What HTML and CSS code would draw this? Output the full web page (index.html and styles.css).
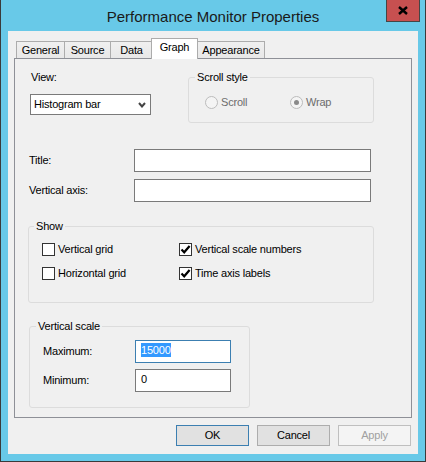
FILE: index.html
```html
<!DOCTYPE html>
<html lang="en">
<head>
<meta charset="utf-8">
<title>Performance Monitor Properties</title>
<link rel="stylesheet" href="styles.css">
</head>
<body>
<div class="window">
  <div class="titlebar">
    <span class="caption">Performance Monitor Properties</span>
    <div class="close-btn">
      <svg width="10" height="9" viewBox="0 0 10 9"><path d="M1 1 L9 8 M9 1 L1 8" stroke="#000" stroke-width="2.4" fill="none"/></svg>
    </div>
  </div>
  <div class="client">
    <div class="tabs">
      <div class="tab t-general">General</div>
      <div class="tab t-source">Source</div>
      <div class="tab t-data">Data</div>
      <div class="tab tab-active t-graph">Graph</div>
      <div class="tab t-appearance">Appearance</div>
    </div>
    <div class="panel">
      <div class="top-row">
        <div class="view-col">
          <div class="lbl view-lbl">View:</div>
          <div class="select">
            <span>Histogram bar</span>
            <svg class="chev" width="8" height="6" viewBox="0 0 8 6"><path d="M1 1 L4 4.5 L7 1" stroke="#444" stroke-width="2" fill="none"/></svg>
          </div>
        </div>
        <fieldset class="group scroll-group">
          <legend>Scroll style</legend>
          <div class="radios">
            <div class="radio-item"><span class="radio"></span><span class="disabled-text">Scroll</span></div>
            <div class="radio-item"><span class="radio radio-on"></span><span class="disabled-text">Wrap</span></div>
          </div>
        </fieldset>
      </div>

      <div class="text-rows">
        <div class="lbl">Title:</div>
        <div class="edit"></div>
        <div class="lbl">Vertical axis:</div>
        <div class="edit"></div>
      </div>

      <fieldset class="group show-group">
        <legend>Show</legend>
        <div class="checks">
          <div class="check-item"><span class="cbox"></span><span>Vertical grid</span></div>
          <div class="check-item"><span class="cbox"><svg width="11" height="11" viewBox="0 0 11 11"><path d="M1.5 5.5 L4.2 8.3 L9.6 2" stroke="#000" stroke-width="2.2" fill="none"/></svg></span><span>Vertical scale numbers</span></div>
          <div class="check-item"><span class="cbox"></span><span>Horizontal grid</span></div>
          <div class="check-item"><span class="cbox"><svg width="11" height="11" viewBox="0 0 11 11"><path d="M1.5 5.5 L4.2 8.3 L9.6 2" stroke="#000" stroke-width="2.2" fill="none"/></svg></span><span>Time axis labels</span></div>
        </div>
      </fieldset>

      <fieldset class="group scale-group">
        <legend>Vertical scale</legend>
        <div class="scale-rows">
          <div class="lbl">Maximum:</div>
          <div class="edit edit-small edit-focus"><span class="sel">15000</span></div>
          <div class="lbl">Minimum:</div>
          <div class="edit edit-small"><span>0</span></div>
        </div>
      </fieldset>
    </div>
    <div class="buttons">
      <div class="btn btn-default">OK</div>
      <div class="btn">Cancel</div>
      <div class="btn btn-disabled">Apply</div>
    </div>
  </div>
</div>
</body>
</html>
```

FILE: styles.css
```css
html, body {
  margin: 0;
  padding: 0;
  background: #ffffff;
}

body {
  font-family: "Liberation Sans", Arial, sans-serif;
  font-size: 11px;
  letter-spacing: -0.2px;
  color: #000;
}

.window {
  width: 426px;
  height: 462px;
  box-sizing: border-box;
  background: #68c9e8;
  border: 1px solid #3a3a3a;
  border-top: 0;
  display: flex;
  flex-direction: column;
  position: relative;
}

.titlebar {
  height: 31px;
  display: flex;
  align-items: center;
  justify-content: center;
  flex: none;
}

.caption {
  font-size: 15px;
  letter-spacing: 0;
  color: #1a1a1a;
  line-height: 17px;
  margin-top: 1px;
}

.close-btn {
  position: absolute;
  top: 0;
  right: 5px;
  width: 34px;
  height: 22px;
  box-sizing: border-box;
  background: #c75050;
  border: 1px solid #454545;
  border-top: 0;
  display: flex;
  align-items: center;
  justify-content: center;
}

.close-btn svg {
  display: block;
  margin-top: 0px;
}

.client {
  margin: 0 7px 7px 7px;
  height: 423px;
  box-sizing: border-box;
  background: #f0f0f0;
  padding: 7px 6px 0 6px;
  display: flex;
  flex-direction: column;
}

/* Tabs */
.tabs {
  height: 20px;
  display: flex;
  align-items: flex-end;
  padding-left: 2px;
  flex: none;
}

.tab {
  height: 17px;
  box-sizing: border-box;
  border: 1px solid #acacac;
  border-bottom: 0;
  background: linear-gradient(#f0f0f0, #e8e8e8);
  line-height: 16px;
  text-align: center;
  margin-left: -1px;
}

.t-general { width: 49px; margin-left: 0; }
.t-source { width: 47px; }
.t-data { width: 43px; }
.t-graph { width: 47px; margin-left: -2px; }
.t-appearance { width: 68px; margin-left: -1px; }

.tab-active {
  height: 21px;
  background: #ffffff;
  margin-bottom: -1px;
  position: relative;
  z-index: 1;
  padding-bottom: 4px;
}

/* Panel */
.panel {
  height: 360px;
  box-sizing: border-box;
  border: 1px solid #8e9097;
  background: #f0f0f0;
  padding-top: 12px;
  flex: none;
}

.lbl {
  line-height: 13px;
}

.top-row {
  display: flex;
  align-items: flex-start;
  margin-left: 15px;
}

.view-col {
  width: 158px;
}

.view-lbl {
  padding-left: 1px;
}

.select {
  margin-top: 10px;
  width: 121px;
  height: 21px;
  box-sizing: border-box;
  border: 1px solid #7a7a7a;
  background: #fff;
  display: flex;
  align-items: center;
  justify-content: space-between;
  padding: 0 3px 0 3px;
  line-height: 13px;
}

.chev {
  display: block;
  margin-right: 1px;
}

fieldset.group {
  margin: 0;
  padding: 0;
  border: 1px solid #dcdcdc;
  border-radius: 3px;
  box-sizing: border-box;
  min-width: 0;
}

fieldset.group legend {
  padding: 0 2px;
  margin-left: 6px;
  line-height: 13px;
}

.scroll-group {
  width: 186px;
  padding-bottom: 13px !important;
}

.radios {
  margin-top: 12px;
  margin-left: 16px;
  display: grid;
  grid-template-columns: 85px auto;
}

.radio-item {
  display: flex;
  align-items: center;
  gap: 3px;
  height: 13px;
  line-height: 13px;
}

.radio {
  width: 13px;
  height: 13px;
  box-sizing: border-box;
  border-radius: 50%;
  border: 1px solid #bcbcbc;
  background: #f4f4f4;
  display: flex;
  align-items: center;
  justify-content: center;
  flex: none;
}

.radio-on::after {
  content: "";
  width: 5px;
  height: 5px;
  border-radius: 50%;
  background: #8a8a8a;
}

.disabled-text {
  color: #6d6d6d;
}

.text-rows {
  margin-top: 26px;
  margin-left: 14px;
  display: grid;
  grid-template-columns: 105px 237px;
  row-gap: 7px;
  align-items: center;
}

.edit {
  height: 23px;
  box-sizing: border-box;
  border: 1px solid #7a7a7a;
  background: #fff;
  padding: 2px 0 0 5px;
  line-height: 14px;
}

.show-group {
  margin-top: 18px !important;
  margin-left: 13px !important;
  width: 346px;
  padding-bottom: 22px !important;
}

.show-group legend {
  margin-left: 5px !important;
}

.checks {
  margin-top: 10px;
  margin-left: 13px;
  display: grid;
  grid-template-columns: 137px auto;
  row-gap: 11px;
}

.check-item {
  display: flex;
  align-items: center;
  gap: 3px;
  height: 13px;
  line-height: 13px;
}

.cbox {
  width: 13px;
  height: 13px;
  box-sizing: border-box;
  border: 1px solid #333;
  background: #fff;
  display: flex;
  align-items: center;
  justify-content: center;
  flex: none;
}

.cbox svg {
  display: block;
}

.scale-group {
  margin-top: 17px !important;
  margin-left: 14px !important;
  width: 221px;
  padding-bottom: 15px !important;
}

.scale-rows {
  margin-top: 7px;
  margin-left: 13px;
  display: grid;
  grid-template-columns: 92px 96px;
  row-gap: 6px;
  align-items: center;
}

.edit-focus {
  border-color: #3c7fb1;
}

.sel {
  background: #3399ff;
  color: #fff;
  display: inline-block;
  line-height: 14px;
}

/* Buttons */
.buttons {
  margin-top: 7px;
  display: flex;
  justify-content: flex-end;
  gap: 8px;
  padding-right: 1px;
  flex: none;
}

.btn {
  width: 73px;
  height: 21px;
  box-sizing: border-box;
  border: 1px solid #adadad;
  background: #e1e1e1;
  text-align: center;
  line-height: 19px;
}

.btn-default {
  border-color: #3c7fb1;
}

.btn-disabled {
  background: #f4f4f4;
  border-color: #bfbfbf;
  color: #a0a0a0;
}
```
